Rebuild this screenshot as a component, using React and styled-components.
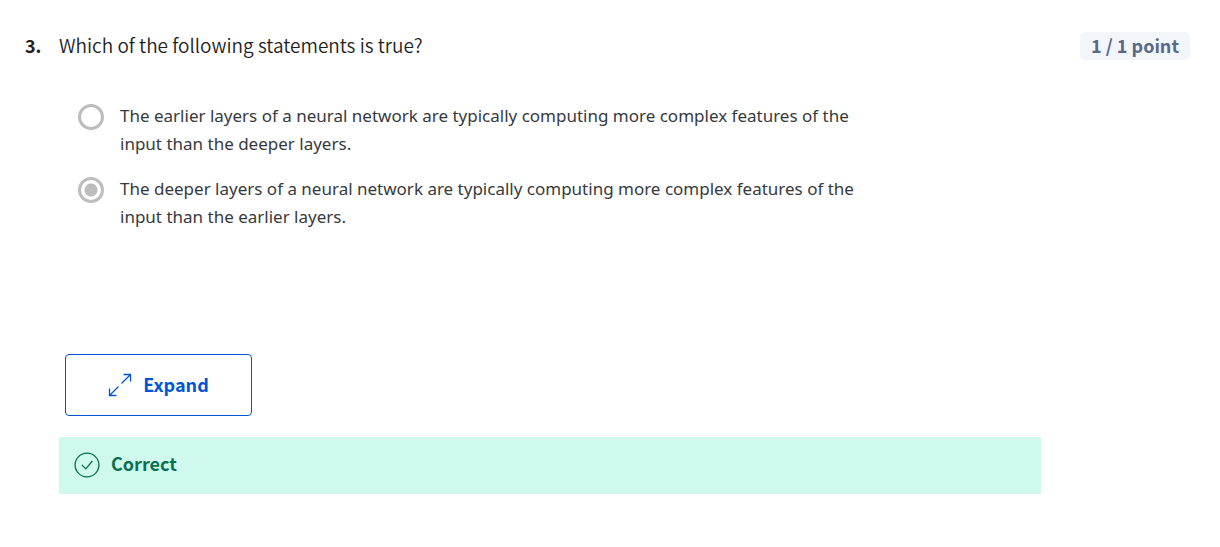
import React from "react";
import styled, { createGlobalStyle } from "styled-components";

const GlobalStyle = createGlobalStyle`
  *, *::before, *::after { box-sizing: border-box; }
  body {
    margin: 0;
    background: #fff;
    color: #1f1f1f;
    font-family: "Noto Sans CJK SC", "Noto Sans", sans-serif;
  }
`;

const Question = styled.main`
  display: grid;
  grid-template-columns: 34px minmax(0, 1fr) auto;
  padding: 32px 30px 52px 25px;
  font-size: 18px;
  line-height: 26px;
`;

const QuestionNumber = styled.span`
  font-weight: 700;
`;

const Prompt = styled.h1`
  margin: 0;
  font-size: 19px;
  font-weight: 350;
`;

const Points = styled.span`
  padding: 0 11px 2px;
  border-radius: 6px;
  background: #f2f5fa;
  color: #5b6787;
  font-weight: 600;
`;

const Body = styled.div`
  grid-column: 2 / 4;
  margin-right: 149px;
`;

const Options = styled.fieldset`
  display: flex;
  flex-direction: column;
  gap: 17px;
  margin: 42px 0 0;
  padding: 0 0 0 19px;
  border: 0;
`;

const Option = styled.label`
  display: grid;
  grid-template-columns: 26px minmax(0, 745px);
  column-gap: 16px;
  color: #373a3c;
  font-family: "Noto Sans", sans-serif;
  font-size: 17px;
  line-height: 28px;
`;

const Radio = styled.input`
  appearance: none;
  width: 26px;
  height: 26px;
  margin: 2px 0 0;
  border: 3px solid #bdbdbd;
  border-radius: 50%;
  background: ${({ checked }) =>
    checked ? "radial-gradient(circle, #bdbdbd 6px, #fff 7px)" : "#fff"};
`;

const ExpandButton = styled.button`
  display: flex;
  align-items: center;
  justify-content: center;
  gap: 11px;
  width: 187px;
  height: 62px;
  margin: 123px 0 21px 6px;
  border: 1px solid #0056d2;
  border-radius: 4px;
  background: #fff;
  color: #0056d2;
  font: inherit;
  font-weight: 700;
`;

const Feedback = styled.div`
  display: flex;
  align-items: center;
  gap: 11px;
  min-height: 57px;
  padding: 0 15px 2px;
  background: #cff9ec;
  color: #087051;
  font-weight: 700;
`;

const IconLabel = styled.span`
  padding-bottom: 3px;
`;

const choices = [
  "The earlier layers of a neural network are typically computing more complex features of the input than the deeper layers.",
  "The deeper layers of a neural network are typically computing more complex features of the input than the earlier layers.",
];

export default function App() {
  const [selected, setSelected] = React.useState(1);
  return (
    <>
      <GlobalStyle />
      <Question>
        <QuestionNumber>3.</QuestionNumber>
        <Prompt>Which of the following statements is true?</Prompt>
        <Points>1 / 1 point</Points>
        <Body>
          <Options aria-label="Answers">
            {choices.map((text, index) => (
              <Option key={text}>
                <Radio
                  type="radio"
                  name="answer"
                  checked={selected === index}
                  onChange={() => setSelected(index)}
                />
                <span>{text}</span>
              </Option>
            ))}
          </Options>
          <ExpandButton type="button">
            <svg width="24" height="24" viewBox="0 0 24 24" fill="none" stroke="currentColor" strokeWidth="1.3" aria-hidden="true">
              <path d="M15.5 1.5h7v7M22.5 1.5l-9 9M8.5 22.5h-7v-7M1.5 22.5l9-9" />
            </svg>
            <IconLabel>Expand</IconLabel>
          </ExpandButton>
          <Feedback role="status">
            <svg width="26" height="26" viewBox="0 0 26 26" fill="none" stroke="currentColor" strokeWidth="1.3" aria-hidden="true">
              <circle cx="13" cy="13" r="11.9" />
              <path d="M7.8 12.9l4 4L18.4 9" />
            </svg>
            <IconLabel>Correct</IconLabel>
          </Feedback>
        </Body>
      </Question>
    </>
  );
}
